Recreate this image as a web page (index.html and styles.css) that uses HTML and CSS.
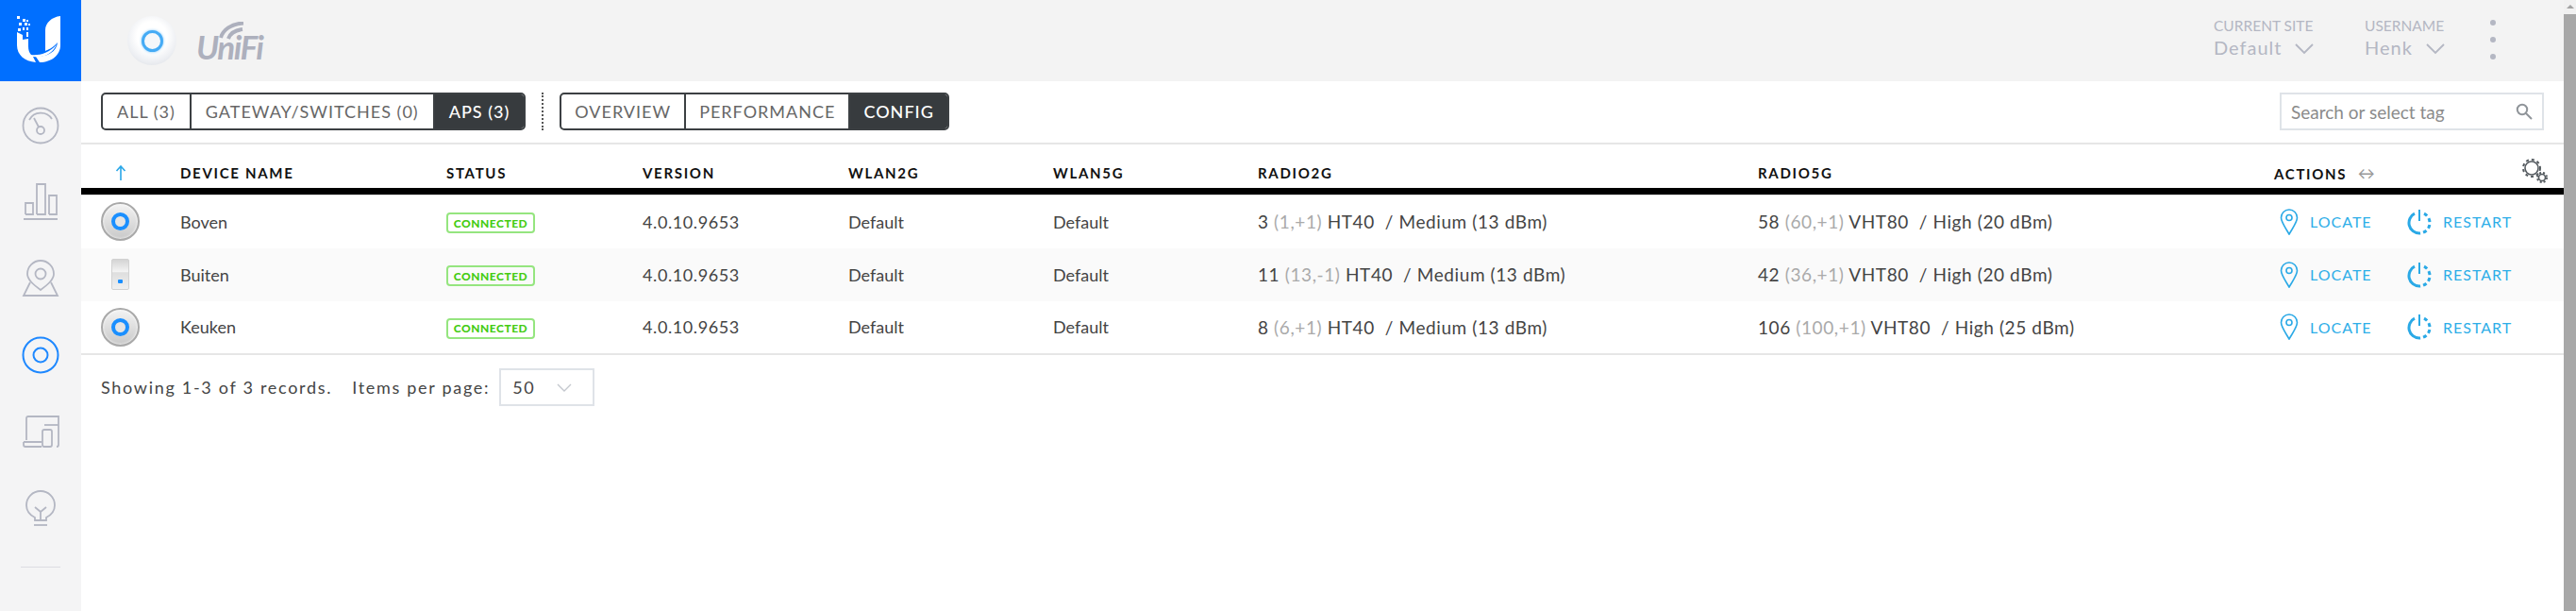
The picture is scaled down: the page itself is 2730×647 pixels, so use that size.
FILE: index.html
```html
<!DOCTYPE html>
<html lang="en">
<head>
<meta charset="utf-8">
<title>UniFi</title>
<link rel="stylesheet" href="styles.css">
</head>
<body>
<div class="app">
  <aside class="sidebar">
    <div class="logo-block">
      <svg width="86" height="86" viewBox="0 0 86 86">
        <path class="u-shape" d="M18 34 L24 37 L24 42 L30 41 L30 49 C30 53 31 56 33 58 C40 59 52 57 60 47 C57 55 48 62 35 60 L38 66 C26 65 18 58 18 48 Z"/>
        <path class="u-shape" d="M64 17 L64 48 C64 58 55 66 42 66 L38 60 C50 60 60 55 61 45 C56 51 50 53 48 54 L48 32 C48 24 55 18 64 17 Z"/>
        <rect class="u-shape" x="18" y="17" width="3" height="3"/><rect class="u-shape" x="24" y="20" width="3" height="3"/><rect class="u-shape" x="28" y="21" width="2" height="2"/><rect class="u-shape" x="26" y="24" width="3" height="3"/><rect class="u-shape" x="20" y="24" width="3" height="3"/><rect class="u-shape" x="30" y="25" width="2" height="2"/><rect class="u-shape" x="24" y="29" width="2" height="3"/><rect class="u-shape" x="28" y="29" width="2" height="3"/><rect class="u-shape" x="19" y="30" width="3" height="3"/><rect class="u-shape" x="28" y="34" width="2" height="5"/>
      </svg>
    </div>
    <nav class="side-nav">
      <a class="side-item"><svg class="side-icon" width="40" height="40" viewBox="0 0 40 40"><circle cx="20" cy="20" r="18.5"/><path d="M8 14 A14 14 0 0 1 32 13"/><circle cx="20" cy="25" r="4"/><path d="M18 21.5 L13 12"/></svg></a>
      <a class="side-item"><svg class="side-icon" width="40" height="40" viewBox="0 0 40 40"><path d="M2 38 H38 M4 33 V21 H12 V33 H4 M16 33 V1 H25 V33 H16 M29 33 V13 H37 V33 H29"/></svg></a>
      <a class="side-item"><svg class="side-icon" width="40" height="40" viewBox="0 0 40 40"><path d="M20 32 C12 26 6 21 6 15 A14 14 0 0 1 34 15 C34 21 28 26 20 32 Z"/><circle cx="20" cy="15" r="5.500"/><path d="M9 24 L2 38 H38 L31 24"/></svg></a>
      <a class="side-item"><svg class="side-icon side-active" width="40" height="40" viewBox="0 0 40 40"><circle cx="20" cy="20" r="18.500"/><circle cx="20" cy="20" r="7.500"/></svg></a>
      <a class="side-item"><svg class="side-icon" width="40" height="40" viewBox="0 0 40 40"><path d="M5 29 V6 Q5 4 7 4 H39 V34 Q39 36 37 36 M2 31 H21 M2 31 V34 Q2 36 4 36 H21"/><rect x="22" y="18" width="10" height="18" rx="2"/><path d="M24 13 H39"/></svg></a>
      <a class="side-item"><svg class="side-icon" width="40" height="40" viewBox="0 0 40 40"><path d="M14 33 V30 C8 27 5 22 5 17 A15 15 0 0 1 35 17 C35 22 32 27 26 30 V33 H14 Z"/><path d="M20 33 V24 M14 19 L20 24 L26 19"/><path d="M13 38 H27"/></svg></a>
    </nav>
    <div class="side-divider"></div>
  </aside>
  <div class="content">
    <header class="topbar">
      <div class="brand">
        <div class="brand-ap"><span class="brand-ring"></span></div>
        <div class="brand-word">
          <svg class="brand-arcs" width="28" height="19" viewBox="0 0 28 19"><path d="M2 17 C4 9 13 2 26 1.500"/><path d="M10 18 C12 12 17 9 25 8"/></svg>
          <span class="brand-text">UniFi</span>
        </div>
      </div>
      <div class="top-right">
        <div class="top-field site-field">
          <div class="top-label">CURRENT SITE</div>
          <div class="top-value"><span>Default</span><svg class="chev" width="20" height="12" viewBox="0 0 20 12"><path d="M1 1 L10 10 L19 1"/></svg></div>
        </div>
        <div class="top-field user-field">
          <div class="top-label">USERNAME</div>
          <div class="top-value"><span>Henk</span><svg class="chev" width="20" height="12" viewBox="0 0 20 12"><path d="M1 1 L10 10 L19 1"/></svg></div>
        </div>
        <div class="dots"><i></i><i></i><i></i></div>
      </div>
    </header>
    <main class="main">
      <div class="toolbar">
        <div class="btn-group btn-wide">
          <a class="seg">ALL (3)</a><a class="seg">GATEWAY/SWITCHES (0)</a><a class="seg seg-on">APS (3)</a>
        </div>
        <div class="tool-sep"></div>
        <div class="btn-group">
          <a class="seg">OVERVIEW</a><a class="seg">PERFORMANCE</a><a class="seg seg-on">CONFIG</a>
        </div>
        <div class="search">
          <span>Search or select tag</span>
          <svg class="search-icon" width="18" height="18" viewBox="0 0 18 18"><circle cx="7" cy="7" r="5.200"/><path d="M11 11 L17 17"/></svg>
        </div>
      </div>
      <table class="devices">
        <colgroup>
          <col class="c-icon"><col class="c-name"><col class="c-status"><col class="c-ver"><col class="c-wlan2"><col class="c-wlan5"><col class="c-r2"><col class="c-r5"><col class="c-act">
        </colgroup>
        <thead>
          <tr>
            <th class="sort-cell"><svg class="sort-arrow" width="12" height="16" viewBox="0 0 12 16"><path d="M6 16 V1 M1.500 6 L6 1 L10.500 6"/></svg></th>
            <th>DEVICE NAME</th><th>STATUS</th><th>VERSION</th><th>WLAN2G</th><th>WLAN5G</th><th>RADIO2G</th><th>RADIO5G</th>
            <th class="act-head">ACTIONS <span class="resize">↔</span>
              <svg class="gears" width="28" height="28" viewBox="0 0 28 28"><circle cx="11" cy="11" r="7" /><circle cx="11" cy="11" r="9" class="gear-teeth"/><circle cx="22" cy="21" r="3.500"/><circle cx="22" cy="21" r="5" class="gear-teeth small"/></svg>
            </th>
          </tr>
        </thead>
        <tbody>
          <tr>
            <td class="icon-cell"><div class="ap-round"><span></span></div></td>
            <td>Boven</td><td><span class="badge">CONNECTED</span></td><td class="ver">4.0.10.9653</td><td>Default</td><td>Default</td>
            <td class="radio">3 <span class="muted">(1,+1)</span> HT40 &nbsp;/ Medium (13 dBm)</td>
            <td class="radio">58 <span class="muted">(60,+1)</span> VHT80 &nbsp;/ High (20 dBm)</td>
            <td><div class="actions">
              <a class="act act-locate"><svg width="20" height="28" viewBox="0 0 20 28"><path d="M10 27 C6 20 1.500 14 1.500 9.500 A8.500 8.500 0 0 1 18.500 9.500 C18.500 14 14 20 10 27 Z"/><circle cx="10" cy="9.500" r="3"/></svg>LOCATE</a>
              <a class="act"><svg width="26" height="28" viewBox="0 0 26 28"><path class="pw-line" d="M13 1 V13"/><path class="pw-solid" d="M8 5.200 A11 11 0 0 0 13 26"/><path class="pw-dash" d="M18 5.200 A11 11 0 0 1 13 26"/></svg>RESTART</a>
            </div></td>
          </tr>
          <tr class="alt">
            <td class="icon-cell"><div class="ap-wall"><span></span></div></td>
            <td>Buiten</td><td><span class="badge">CONNECTED</span></td><td class="ver">4.0.10.9653</td><td>Default</td><td>Default</td>
            <td class="radio">11 <span class="muted">(13,-1)</span> HT40 &nbsp;/ Medium (13 dBm)</td>
            <td class="radio">42 <span class="muted">(36,+1)</span> VHT80 &nbsp;/ High (20 dBm)</td>
            <td><div class="actions">
              <a class="act act-locate"><svg width="20" height="28" viewBox="0 0 20 28"><path d="M10 27 C6 20 1.500 14 1.500 9.500 A8.500 8.500 0 0 1 18.500 9.500 C18.500 14 14 20 10 27 Z"/><circle cx="10" cy="9.500" r="3"/></svg>LOCATE</a>
              <a class="act"><svg width="26" height="28" viewBox="0 0 26 28"><path class="pw-line" d="M13 1 V13"/><path class="pw-solid" d="M8 5.200 A11 11 0 0 0 13 26"/><path class="pw-dash" d="M18 5.200 A11 11 0 0 1 13 26"/></svg>RESTART</a>
            </div></td>
          </tr>
          <tr>
            <td class="icon-cell"><div class="ap-round"><span></span></div></td>
            <td>Keuken</td><td><span class="badge">CONNECTED</span></td><td class="ver">4.0.10.9653</td><td>Default</td><td>Default</td>
            <td class="radio">8 <span class="muted">(6,+1)</span> HT40 &nbsp;/ Medium (13 dBm)</td>
            <td class="radio">106 <span class="muted">(100,+1)</span> VHT80 &nbsp;/ High (25 dBm)</td>
            <td><div class="actions">
              <a class="act act-locate"><svg width="20" height="28" viewBox="0 0 20 28"><path d="M10 27 C6 20 1.500 14 1.500 9.500 A8.500 8.500 0 0 1 18.500 9.500 C18.500 14 14 20 10 27 Z"/><circle cx="10" cy="9.500" r="3"/></svg>LOCATE</a>
              <a class="act"><svg width="26" height="28" viewBox="0 0 26 28"><path class="pw-line" d="M13 1 V13"/><path class="pw-solid" d="M8 5.200 A11 11 0 0 0 13 26"/><path class="pw-dash" d="M18 5.200 A11 11 0 0 1 13 26"/></svg>RESTART</a>
            </div></td>
          </tr>
        </tbody>
      </table>
      <div class="pager">
        <span class="pager-count">Showing 1-3 of 3 records.</span>
        <span class="pager-label">Items per page:</span>
        <div class="pager-select"><span>50</span><svg class="pager-chev" width="16" height="9" viewBox="0 0 16 9"><path d="M1 1 L8 8 L15 1"/></svg></div>
      </div>
    </main>
  </div>
  <div class="scrollbar"><div class="scroll-arrow"></div><div class="scroll-thumb"></div></div>
</div>
</body>
</html>
```
FILE: styles.css
```css
* { box-sizing: border-box; }
html, body { margin: 0; height: 100%; overflow: hidden; }
body { font-family: Lato, "Open Sans", sans-serif; color: #444; background: #fff; }
.app { display: flex; height: 647px; }

.sidebar { width: 86px; flex: none; background: #f4f4f5; display: flex; flex-direction: column; align-items: center; }
.logo-block { width: 86px; height: 86px; background: #006fff; }
.logo-block svg { display: block; }
.u-shape { fill: #fff; }
.side-nav { display: flex; flex-direction: column; padding-top: 6px; }
.side-item { height: 81px; display: flex; align-items: center; justify-content: center; }
.side-icon { fill: none; stroke: #b4b7c3; stroke-width: 1.8; }
.side-active { stroke: #1e88ff; stroke-width: 2; }
.side-divider { width: 42px; border-top: 1px solid #dcdde3; margin-top: 22px; }

.content { flex: 1; min-width: 0; display: flex; flex-direction: column; }
.topbar { height: 86px; background: #f3f3f3; display: flex; align-items: center; justify-content: space-between; padding-left: 49px; }
.brand { display: flex; align-items: center; gap: 21px; }
.brand-ap { width: 52px; height: 52px; border-radius: 50%; background: radial-gradient(circle at 50% 42%, #fff 40%, #eceef2 68%, #d2d6dc 100%); display: flex; align-items: center; justify-content: center; }
.brand-ring { width: 23px; height: 23px; border-radius: 50%; border: 3px solid #45abf5; background: #f5f7fa; box-shadow: 0 0 3px #7cc4f8; }
.brand-word { position: relative; width: 70px; height: 40px; }
.brand-text { position: absolute; left: 0; bottom: -7px; font-size: 35px; font-weight: 700; font-style: italic; color: #adb0bd; letter-spacing: -1.5px; }
.brand-arcs { position: absolute; left: 24px; top: 0; fill: none; stroke: #adb0bd; stroke-width: 4; }
.top-right { display: flex; align-items: flex-start; height: 86px; padding-top: 18px; }
.top-field { display: flex; flex-direction: column; }
.site-field { width: 160px; }
.user-field { width: 133px; }
.top-label { font-size: 15.500px; line-height: 18px; color: #b4b7c3; }
.top-value { display: flex; align-items: center; gap: 14px; font-size: 20px; line-height: 28px; letter-spacing: 1px; color: #b4b7c3; }
.chev { fill: none; stroke: #b4b7c3; stroke-width: 1.8; margin-top: 4px; }
.dots { display: flex; flex-direction: column; gap: 12px; width: 78px; padding-top: 3px; }
.dots i { width: 6px; height: 6px; border-radius: 50%; background: #b4b7c3; }

.main { flex: 1; }
.toolbar { height: 67px; padding: 12px 21px 15px; display: flex; align-items: stretch; border-bottom: 2px solid #e6e6e6; }
.btn-group { display: flex; height: 40px; border: 2px solid #3c4043; border-radius: 5px; overflow: hidden; }
.seg { display: flex; align-items: center; padding: 0 14px; font-size: 18px; letter-spacing: 1px; color: #666; border-right: 2px solid #3c4043; white-space: nowrap; }
.btn-wide .seg { padding: 0 15px; }
.seg:last-child { border-right: 0; }
.seg-on { background: #373b3e; color: #fff; font-weight: 500; }
.tool-sep { width: 0; height: 40px; border-left: 2px dotted #555; margin: 0 17px; }
.search { margin-left: auto; width: 280px; height: 40px; border: 2px solid #dfe3e8; display: flex; align-items: center; justify-content: space-between; padding: 0 10px; font-size: 19px; color: #8b8b8b; }
.search-icon { fill: none; stroke: #8f9499; stroke-width: 2; }

.devices { width: 100%; table-layout: fixed; border-collapse: separate; border-spacing: 0; }
.c-icon { width: 105px; } .c-name { width: 282px; } .c-status { width: 208px; } .c-ver { width: 218px; } .c-wlan2 { width: 217px; } .c-wlan5 { width: 217px; } .c-r2 { width: 530px; } .c-r5 { width: 547px; }
.devices th { height: 53px; padding: 13px 0 0; text-align: left; font-size: 15px; font-weight: 700; letter-spacing: 1.7px; color: #111; border-bottom: 7px solid #000; }
.devices td { height: 56.500px; padding: 0; font-size: 18px; color: #444; white-space: nowrap; }
.devices .ver { letter-spacing: .6px; }
.devices .radio { font-size: 19px; letter-spacing: .6px; }
.devices tbody tr:first-child td { border-top: 1px solid #ddd; }
.devices tbody tr:last-child td { border-bottom: 2px solid #e6e6e6; }
.alt td { background: #fafafa; }
.muted { color: #aaa; }
.devices .sort-cell { padding-left: 36px; }
.sort-arrow { display: block; fill: none; stroke: #2aa7e8; stroke-width: 1.6; }
.act-head { position: relative; }
.resize { color: #999; font-weight: 400; font-size: 18px; margin-left: 6px; }
.gears { position: absolute; right: 17px; top: 14px; fill: none; stroke: #555b60; stroke-width: 1.6; }
.gear-teeth { stroke-width: 2; stroke-dasharray: 3 3; }
.gear-teeth.small { stroke-dasharray: 2 2; }
.devices .icon-cell { padding-left: 21px; }
.ap-round { width: 41px; height: 41px; border-radius: 50%; border: 2px solid #a9a9a9; background: linear-gradient(#f3f3f3, #c9c9c9); display: flex; align-items: center; justify-content: center; box-shadow: inset 0 0 3px #fff; }
.ap-round span { width: 19px; height: 19px; border-radius: 50%; border: 4px solid #1a8fff; background: #e4e4e4; }
.ap-wall { width: 19px; height: 33px; margin-left: 11px; border-radius: 2px; border: 1px solid #d2d2d2; background: linear-gradient(#d4d4d4, #f4f4f4 42%, #dedede 44%, #f0f0f0); display: flex; align-items: flex-end; justify-content: center; padding-bottom: 6px; }
.ap-wall span { width: 5px; height: 4px; background: #1a8fff; border-radius: 1px; }
.badge { display: inline-flex; align-items: center; justify-content: center; width: 94px; height: 22px; border: 2px solid #95e57f; border-radius: 4px; background: #fff; color: #45cc14; font-size: 12px; font-weight: 900; letter-spacing: .5px; }
.alt .badge { background: #fafafa; }
.actions { display: flex; align-items: center; padding-left: 6px; }
.act { display: flex; align-items: center; gap: 12px; font-size: 16px; letter-spacing: 1px; color: #2eaee8; }
.act-locate { width: 135px; }
.act svg { fill: none; stroke: #2aa9e6; stroke-width: 1.6; }
.act .pw-line { stroke-width: 2; }
.act .pw-solid { stroke-width: 3; }
.act .pw-dash { stroke-width: 3; stroke-dasharray: 4 3; }

.pager { display: flex; align-items: center; height: 39px; margin-top: 15px; padding-left: 21px; font-size: 18px; letter-spacing: 1.700px; color: #444; }
.pager-label { margin-left: 21px; }
.pager-select { margin-left: 10px; width: 101px; height: 40px; border: 2px solid #dfe3e8; display: flex; align-items: center; justify-content: space-between; padding: 0 22px 0 12px; }
.pager-chev { fill: none; stroke: #c4c8ce; stroke-width: 1.4; }

.scrollbar { width: 13px; flex: none; background: #f1f1f1; display: flex; flex-direction: column; }
.scroll-arrow { height: 15px; display: flex; justify-content: center; padding-top: 5px; }
.scroll-arrow::before { content: ""; border: 4px solid transparent; border-top: 0; border-bottom: 4px solid #a3a3a3; height: 0; }
.scroll-thumb { flex: 1; background: #a8a8a8; }
```
